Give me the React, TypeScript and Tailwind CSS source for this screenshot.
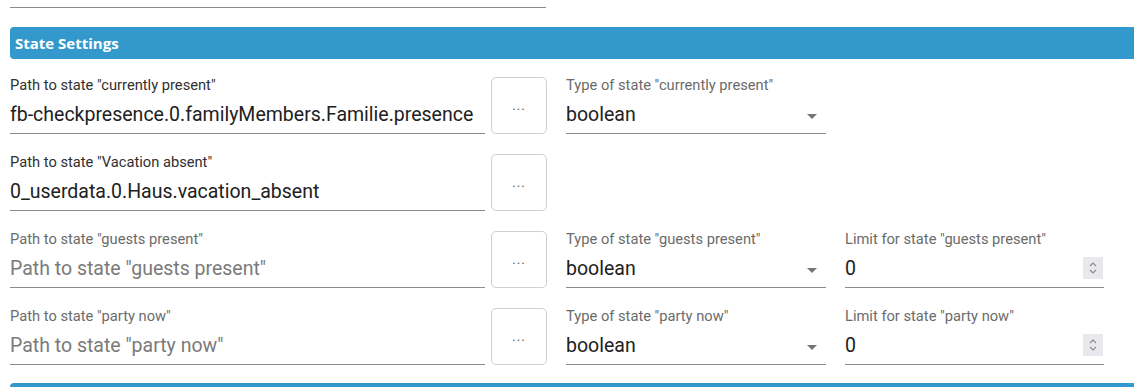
import React from "react";

const roboto = { fontFamily: "Roboto, 'Noto Sans', sans-serif" };

function PathField({ label, value, placeholder, dark }: { label: string; value?: string; placeholder?: string; dark?: boolean }) {
  return (
    <div className="flex h-[57px] w-[475px] flex-col border-b border-[#8c8c8c]">
      <div className={`text-[14.7px] leading-[16px] whitespace-nowrap ${dark ? "text-[#303030]" : "text-[#6b6b6b]"}`}>{label}</div>
      <div className={`mt-[10px] text-[19.5px] leading-[24px] whitespace-nowrap ${value ? "text-[#212121]" : "text-[#7a7a7a]"}`}>
        {value ?? placeholder}
      </div>
    </div>
  );
}

function DotsButton() {
  return (
    <div className="ml-[6px] flex h-[57px] w-[56px] items-center justify-center rounded-[5px] border border-[#cfcfcf] bg-white text-[13px] leading-none text-[#555] tracking-[1px]">
      ...
    </div>
  );
}

function SelectField({ label }: { label: string }) {
  return (
    <div className="relative ml-[19px] flex h-[57px] w-[260px] flex-col border-b border-[#8c8c8c]">
      <div className="text-[14.7px] leading-[16px] whitespace-nowrap text-[#6b6b6b]">{label}</div>
      <div className="mt-[10px] text-[19.5px] leading-[24px] text-[#212121]">boolean</div>
      <svg className="absolute right-[2px] top-[27px]" width="24" height="24" viewBox="0 0 24 24">
        <path d="M7 10l5 5 5-5z" fill="#757575" />
      </svg>
    </div>
  );
}

function LimitField({ label }: { label: string }) {
  return (
    <div className="relative ml-[19px] flex h-[57px] w-[259px] flex-col border-b border-[#8c8c8c]">
      <div className="text-[14.7px] leading-[16px] whitespace-nowrap text-[#6b6b6b]">{label}</div>
      <div className="mt-[10px] text-[19.5px] leading-[24px] text-[#212121]">0</div>
      <div className="absolute right-[1px] top-[26px] flex h-[22px] w-[20px] items-center justify-center bg-[#e9e9ed]">
        <svg width="10" height="16" viewBox="0 0 10 16">
          <path d="M2 6 L5 3 L8 6" stroke="#8a8a8a" strokeWidth="1.1" fill="none" />
          <path d="M2 10 L5 13 L8 10" stroke="#8a8a8a" strokeWidth="1.1" fill="none" />
        </svg>
      </div>
    </div>
  );
}

export default function App() {
  return (
    <div className="h-[387px] w-[1134px] overflow-hidden bg-white" style={roboto}>
      <div className="pl-[10px]">
        <div className="mt-[7px] h-px w-[536px] bg-[#8c8c8c]" />
        <div className="mt-[19px] flex h-[32px] w-[1200px] items-center rounded-l-[4px] bg-[#3399cc] pl-[5px]">
          <span className="text-[15px] font-bold text-white" style={{ fontFamily: "'Open Sans', sans-serif" }}>
            State Settings
          </span>
        </div>
        <div className="mt-[18px] flex flex-col gap-[20px]">
          <div className="flex items-end">
            <PathField dark label={'Path to state "currently present"'} value="fb-checkpresence.0.familyMembers.Familie.presence" />
            <DotsButton />
            <SelectField label={'Type of state "currently present"'} />
          </div>
          <div className="flex items-end">
            <PathField dark label={'Path to state "Vacation absent"'} value="0_userdata.0.Haus.vacation_absent" />
            <DotsButton />
          </div>
          <div className="flex items-end">
            <PathField label={'Path to state "guests present"'} placeholder={'Path to state "guests present"'} />
            <DotsButton />
            <SelectField label={'Type of state "guests present"'} />
            <LimitField label={'Limit for state "guests present"'} />
          </div>
          <div className="flex items-end">
            <PathField label={'Path to state "party now"'} placeholder={'Path to state "party now"'} />
            <DotsButton />
            <SelectField label={'Type of state "party now"'} />
            <LimitField label={'Limit for state "party now"'} />
          </div>
        </div>
        <div className="mt-[18px] h-[10px] w-[1200px] rounded-l-[4px] bg-[#3399cc]" />
      </div>
    </div>
  );
}
